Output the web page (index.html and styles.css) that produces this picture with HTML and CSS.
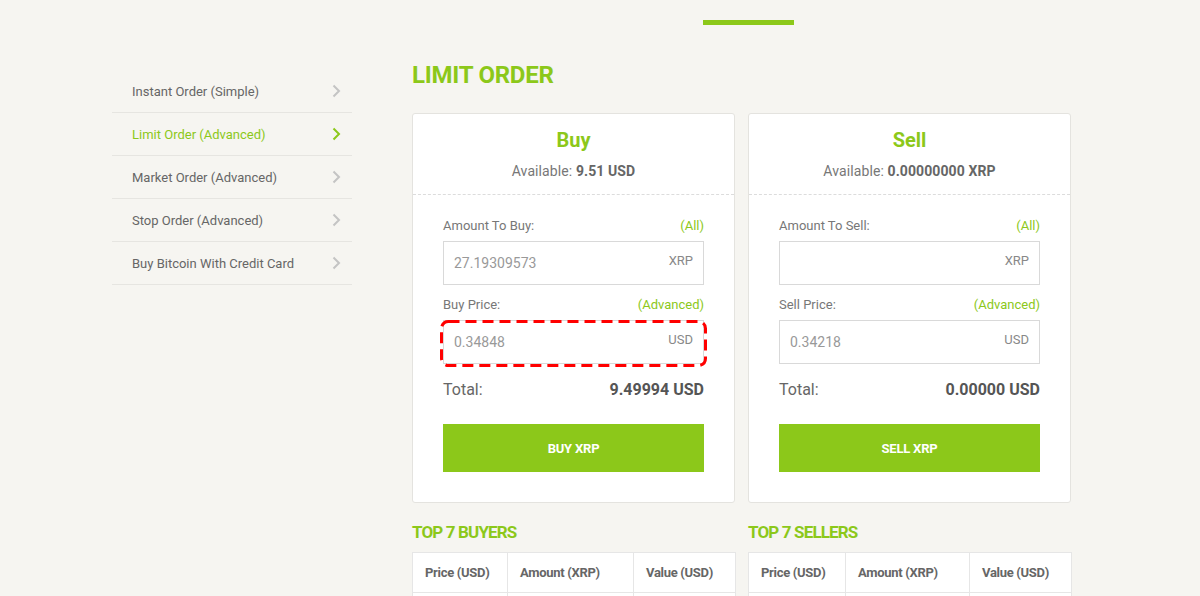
FILE: index.html
```html
<!DOCTYPE html>
<html>
<head>
<meta charset="utf-8">
<link rel="stylesheet" href="styles.css">
</head>
<body>
<div class="topbar"><div class="indicator"></div></div>
<div class="layout">
  <nav class="sidebar">
    <a class="nav-item">Instant Order (Simple)<svg class="chev" width="9" height="14" viewBox="0 0 9 14"><polyline points="1.5,1.5 7,7 1.5,12.5" fill="none" stroke="currentColor" stroke-width="2"/></svg></a>
    <a class="nav-item active">Limit Order (Advanced)<svg class="chev" width="9" height="14" viewBox="0 0 9 14"><polyline points="1.5,1.5 7,7 1.5,12.5" fill="none" stroke="currentColor" stroke-width="2"/></svg></a>
    <a class="nav-item">Market Order (Advanced)<svg class="chev" width="9" height="14" viewBox="0 0 9 14"><polyline points="1.5,1.5 7,7 1.5,12.5" fill="none" stroke="currentColor" stroke-width="2"/></svg></a>
    <a class="nav-item">Stop Order (Advanced)<svg class="chev" width="9" height="14" viewBox="0 0 9 14"><polyline points="1.5,1.5 7,7 1.5,12.5" fill="none" stroke="currentColor" stroke-width="2"/></svg></a>
    <a class="nav-item">Buy Bitcoin With Credit Card<svg class="chev" width="9" height="14" viewBox="0 0 9 14"><polyline points="1.5,1.5 7,7 1.5,12.5" fill="none" stroke="currentColor" stroke-width="2"/></svg></a>
  </nav>
  <main class="main">
    <h1 class="page-title">LIMIT ORDER</h1>
    <div class="cards">
      <section class="card">
        <div class="card-head">
          <h2 class="card-title">Buy</h2>
          <div class="available">Available: <b>9.51 USD</b></div>
        </div>
        <div class="card-body">
          <div class="label-row"><span>Amount To Buy:</span><span class="link">(All)</span></div>
          <div class="field"><span class="value">27.19309573</span><span class="unit">XRP</span></div>
          <div class="label-row gap"><span>Buy Price:</span><span class="link">(Advanced)</span></div>
          <div class="field-wrap">
            <div class="field"><span class="value">0.34848</span><span class="unit">USD</span></div>
            <svg class="highlight" width="267" height="47" viewBox="0 0 267 47"><rect x="1.5" y="1.5" width="264" height="44" rx="7" ry="7" fill="none" stroke="#f00" stroke-width="3" stroke-dasharray="11 6"/></svg>
          </div>
          <div class="total"><span>Total:</span><b>9.49994 USD</b></div>
          <button class="action">BUY XRP</button>
        </div>
      </section>
      <section class="card">
        <div class="card-head">
          <h2 class="card-title">Sell</h2>
          <div class="available">Available: <b>0.00000000 XRP</b></div>
        </div>
        <div class="card-body">
          <div class="label-row"><span>Amount To Sell:</span><span class="link">(All)</span></div>
          <div class="field"><span class="value"></span><span class="unit">XRP</span></div>
          <div class="label-row gap"><span>Sell Price:</span><span class="link">(Advanced)</span></div>
          <div class="field-wrap">
            <div class="field"><span class="value">0.34218</span><span class="unit">USD</span></div>
          </div>
          <div class="total"><span>Total:</span><b>0.00000 USD</b></div>
          <button class="action">SELL XRP</button>
        </div>
      </section>
    </div>
    <div class="tables">
      <div class="book">
        <h3 class="book-title">TOP 7 BUYERS</h3>
        <table class="book-table">
          <colgroup><col class="c1"><col class="c2"><col class="c3"></colgroup>
          <tr><th>Price (USD)</th><th>Amount (XRP)</th><th>Value (USD)</th></tr>
          <tr><td></td><td></td><td></td></tr>
        </table>
      </div>
      <div class="book">
        <h3 class="book-title">TOP 7 SELLERS</h3>
        <table class="book-table">
          <colgroup><col class="s1"><col class="s2"><col class="s3"></colgroup>
          <tr><th>Price (USD)</th><th>Amount (XRP)</th><th>Value (USD)</th></tr>
          <tr><td></td><td></td><td></td></tr>
        </table>
      </div>
    </div>
  </main>
</div>
</body>
</html>
```
FILE: styles.css
```css
* { box-sizing: border-box; }
html, body { margin: 0; padding: 0; }
body {
  background: #f6f5f1;
  font-family: Roboto, "Liberation Sans", sans-serif;
  color: #666;
  height: 596px;
  overflow: hidden;
}
.topbar { padding-top: 20px; height: 25px; }
.indicator { margin-left: 703px; width: 91px; height: 5px; background: #8cc81a; }

.layout { display: flex; padding-left: 112px; gap: 60px; }

.sidebar { width: 240px; padding-top: 45px; display: flex; flex-direction: column; }
.nav-item {
  height: 43px;
  display: flex; align-items: center; justify-content: space-between;
  padding: 0 11px 0 20px;
  font-size: 13px; color: #666;
  border-bottom: 1px solid #e6e5e1;
}
.nav-item .chev { color: #c4c4c4; }
.nav-item.active { color: #8cc81a; }
.nav-item.active .chev { color: #8cc81a; }

.main { width: 659px; }
.page-title {
  margin: 36px 0 0; font-size: 24px; line-height: 28px; font-weight: 700; color: #8cc81a;
  letter-spacing: -0.25px;
}
.cards { display: flex; gap: 13px; margin-top: 24px; }
.card {
  width: 323px; background: #fff; border: 1px solid #e4e3df; border-radius: 3px;
}
.card-head {
  text-align: center; padding: 14px 0 13px;
  border-bottom: 1px dashed #dcdcdc;
}
.card-title { margin: 0; font-size: 20px; line-height: 24px; font-weight: 700; color: #8cc81a; }
.available { margin-top: 9px; font-size: 14px; line-height: 20px; color: #777; letter-spacing: 0.1px; }
.available b { color: #666; }
.card-body { padding: 22px 30px 30px; }
.label-row {
  display: flex; justify-content: space-between; font-size: 13px; line-height: 15px; padding-top: 1px;
  color: #777;
}
.label-row.gap { margin-top: 11px; }
.link { color: #8cc81a; }
.field {
  margin-top: 8px; height: 44px; border: 1px solid #d9d9d9; background: #fff;
  display: flex; justify-content: space-between; padding: 0 10px;
  font-size: 14px;
}
.value { color: #999; padding-top: 13px; }
.unit { color: #888; font-size: 13px; padding-top: 11px; }
.field-wrap { position: relative; margin-top: 8px; }
.field-wrap .field { margin-top: 0; }
.highlight {
  position: absolute; left: -3px; top: 0; pointer-events: none;
}
.total {
  margin-top: 16px; display: flex; justify-content: space-between; align-items: baseline;
  font-size: 16px; line-height: 20px; color: #666;
}
.total b { color: #555; }
.action {
  margin-top: 24px; width: 100%; height: 48px; border: 0; background: #8cc81a; color: #fff;
  font-family: inherit; font-weight: 700; font-size: 13px; letter-spacing: -0.2px;
}

.tables { display: flex; gap: 13px; margin-top: 19px; }
.book { width: 323px; }
.book-title {
  margin: 0; font-size: 17px; line-height: 20px; font-weight: 700; color: #8cc81a;
  letter-spacing: -0.85px;
}
.book-table {
  margin-top: 10px; width: 323px; border-collapse: collapse; background: #fff;
  table-layout: fixed;
}
.book-table th, .book-table td {
  border: 1px solid #e6e6e6; height: 40px; text-align: left; padding: 0 12px;
  font-size: 13px; font-weight: 700; color: #666; letter-spacing: -0.3px;
}
.c1 { width: 95px; } .c2 { width: 126px; } .c3 { width: 102px; }
.s1 { width: 97px; } .s2 { width: 124px; } .s3 { width: 102px; }
```
